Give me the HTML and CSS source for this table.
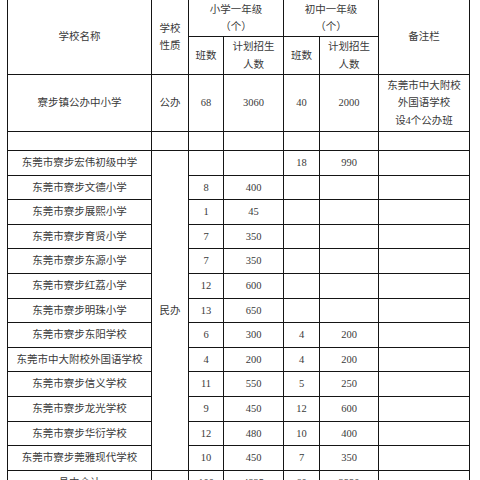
FILE: index.html
```html
<!DOCTYPE html>
<html lang="zh">
<head>
<meta charset="utf-8">
<link rel="stylesheet" href="styles.css">
</head>
<body>
<table class="tbl">
  <colgroup>
    <col class="c-name"><col class="c-type"><col class="c-n1"><col class="c-p1"><col class="c-n2"><col class="c-p2"><col class="c-note">
  </colgroup>
  <tr class="h1">
    <td rowspan="2">学校名称</td>
    <td rowspan="2">学校<br>性质</td>
    <td colspan="2">小学一年级<br>（个）</td>
    <td colspan="2">初中一年级<br>（个）</td>
    <td rowspan="2">备注栏</td>
  </tr>
  <tr class="h2">
    <td>班数</td><td>计划招生<br>人数</td><td>班数</td><td>计划招生<br>人数</td>
  </tr>
  <tr class="r1">
    <td>寮步镇公办中小学</td><td>公办</td><td>68</td><td>3060</td><td>40</td><td>2000</td>
    <td>东莞市中大附校<br>外国语学校<br>设4个公办班</td>
  </tr>
  <tr class="blank"><td></td><td></td><td></td><td></td><td></td><td></td><td></td></tr>
  <tr class="r"><td>东莞市寮步宏伟初级中学</td><td rowspan="13">民办</td><td></td><td></td><td>18</td><td>990</td><td></td></tr>
  <tr class="r"><td>东莞市寮步文德小学</td><td>8</td><td>400</td><td></td><td></td><td></td></tr>
  <tr class="r"><td>东莞市寮步展熙小学</td><td>1</td><td>45</td><td></td><td></td><td></td></tr>
  <tr class="r"><td>东莞市寮步育贤小学</td><td>7</td><td>350</td><td></td><td></td><td></td></tr>
  <tr class="r"><td>东莞市寮步东源小学</td><td>7</td><td>350</td><td></td><td></td><td></td></tr>
  <tr class="r"><td>东莞市寮步红荔小学</td><td>12</td><td>600</td><td></td><td></td><td></td></tr>
  <tr class="r"><td>东莞市寮步明珠小学</td><td>13</td><td>650</td><td></td><td></td><td></td></tr>
  <tr class="r"><td>东莞市寮步东阳学校</td><td>6</td><td>300</td><td>4</td><td>200</td><td></td></tr>
  <tr class="r"><td>东莞市中大附校外国语学校</td><td>4</td><td>200</td><td>4</td><td>200</td><td></td></tr>
  <tr class="r"><td>东莞市寮步信义学校</td><td>11</td><td>550</td><td>5</td><td>250</td><td></td></tr>
  <tr class="r"><td>东莞市寮步龙光学校</td><td>9</td><td>450</td><td>12</td><td>600</td><td></td></tr>
  <tr class="r"><td>东莞市寮步华衍学校</td><td>12</td><td>480</td><td>10</td><td>400</td><td></td></tr>
  <tr class="r"><td>东莞市寮步莞雅现代学校</td><td>10</td><td>450</td><td>7</td><td>350</td><td></td></tr>
  <tr class="r"><td>县内合计</td><td></td><td>100</td><td>4825</td><td>60</td><td>2990</td><td></td></tr>
</table>
</body>
</html>
```

FILE: styles.css
```css
html, body {
  margin: 0;
  padding: 0;
  background: #fff;
  overflow: hidden;
}
.tbl {
  margin: -1px 0 0 7px;
  border-collapse: collapse;
  table-layout: fixed;
  width: 462px;
  font-family: "Liberation Serif", "Noto Sans CJK SC", serif;
  font-size: 10.5px;
  line-height: 17.5px;
  color: #3a3a3a;
}
.c-name { width: 144px; }
.c-type { width: 37px; }
.c-n1 { width: 35px; }
.c-p1 { width: 60px; }
.c-n2 { width: 36px; }
.c-p2 { width: 59px; }
.c-note { width: 91px; }
.tbl td {
  border: 1.5px solid #151515;
  padding: 0;
  text-align: center;
  vertical-align: middle;
  white-space: nowrap;
  overflow: hidden;
}
.h1 { height: 37px; }
.h2 { height: 38px; }
.r1 { height: 57px; }
.blank { height: 19px; }
.r { height: 24.6px; }
```
